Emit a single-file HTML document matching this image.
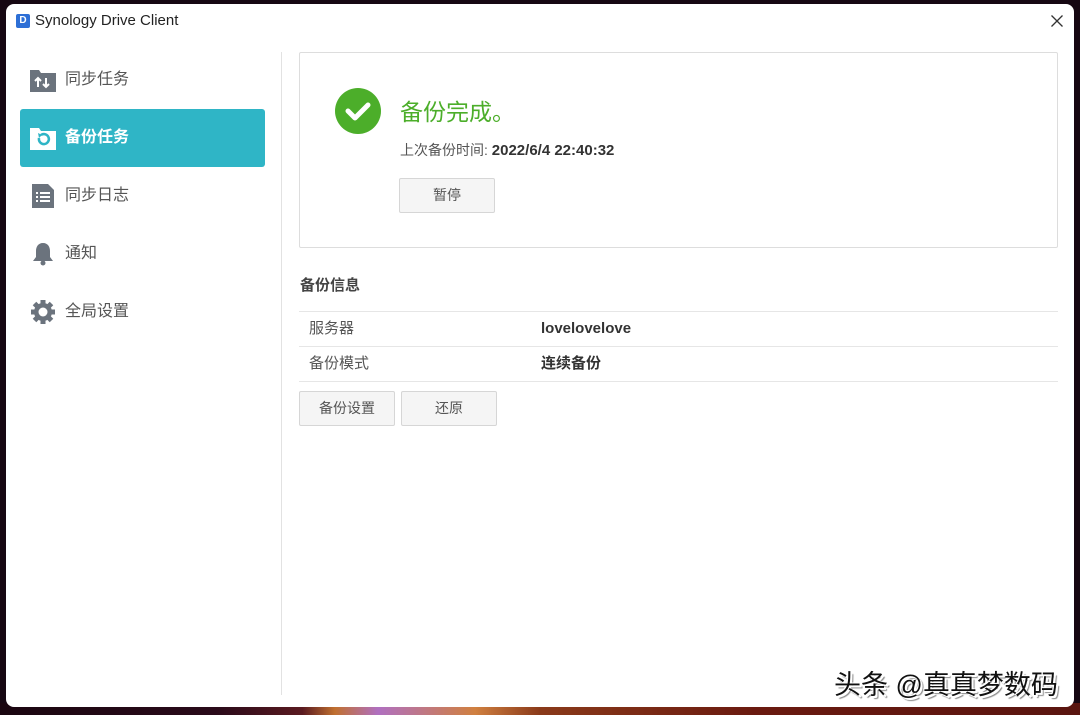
<!DOCTYPE html>
<html><head><meta charset="utf-8"><style>
*{margin:0;padding:0;box-sizing:border-box}
html,body{width:1080px;height:715px;overflow:hidden}
body{background:#160712;position:relative;font-family:"Liberation Sans","Noto Sans CJK SC",sans-serif;color:#333}
.strip{position:absolute;left:0;right:0;bottom:0;height:12px;background:linear-gradient(90deg,#1a0610 0%,#2a0a1a 20%,#5a1a20 28%,#c07030 31%,#b070c0 35%,#d08040 44%,#8a3a1a 50%,#6a1a10 70%,#5a1510 100%)}
.win{position:absolute;left:6px;top:4px;width:1068px;height:703px;background:#fff;border-radius:8px;overflow:hidden}
.title{position:absolute;left:29px;top:8px;font-size:15px;color:#222}
.logo{position:absolute;left:10px;top:10px;width:14px;height:14px;background:#2d6fd6;border-radius:2px;color:#fff;font-size:10px;font-weight:bold;text-align:center;line-height:14px}
.side{position:absolute;left:0;top:0;width:275px;height:100%}
.item{position:absolute;left:14px;width:245px;height:58px;font-size:16px;color:#555;line-height:58px;padding-left:45px}
.item.act{background:#2fb5c6;color:#fff;border-radius:3px;font-weight:bold}
.ic{position:absolute;left:10px;top:17px;width:26px;height:24px}
.vline{position:absolute;left:275px;top:48px;width:1px;height:643px;background:#e2e2e2}
.card{position:absolute;left:293px;top:48px;width:759px;height:196px;border:1px solid #ddd;border-radius:2px}
.btn{position:absolute;background:#f5f5f5;border:1px solid #d6d6d6;border-radius:2px;font-size:14px;color:#555;text-align:center}
.row{position:absolute;left:293px;width:759px;height:35px;border-top:1px solid #e6e6e6;font-size:15px;line-height:34px}
.wm{position:absolute;left:834px;top:663px;font-size:27px;color:#111;text-shadow:2px 2px 0 #fff,-1px -1px 0 #fff,3px 3px 1px #888}
</style></head><body>
<div class="strip"></div>
<div class="win">
<div class="logo">D</div>
<div class="title">Synology Drive Client</div>
<svg style="position:absolute;left:1045px;top:11px" width="12" height="12" viewBox="0 0 12 12"><path d="M0.5 0.5l11 11M11.5 0.5l-11 11" stroke="#333" stroke-width="1.3"/></svg>
<div class="side">
 <div class="item" style="top:47px"><svg class="ic" viewBox="0 0 26 24"><path d="M0 2h9l2 3h15v19H0z" fill="#6b737d"/><path d="M8 19V10M5 13l3-3 3 3M16 10v9M13 16l3 3 3-3" stroke="#fff" stroke-width="2" fill="none"/></svg>同步任务</div>
 <div class="item act" style="top:105px"><svg class="ic" viewBox="0 0 26 24"><path d="M0 2h9l2 3h15v19H0z" fill="#fff"/><path d="M9 12a5 5 0 1 0 2-3" stroke="#2fb5c6" stroke-width="2.5" fill="none"/><path d="M8 7l4 2-3 3z" fill="#2fb5c6"/></svg>备份任务</div>
 <div class="item" style="top:163px"><svg class="ic" viewBox="0 0 26 24" style="left:12px"><path d="M0 0h16l6 6v19H0z" fill="#6b737d"/><path d="M4 9h2M8 9h10M4 13h2M8 13h10M4 17h2M8 17h10" stroke="#fff" stroke-width="2"/></svg>同步日志</div>
 <div class="item" style="top:221px"><svg class="ic" viewBox="0 0 26 24"><path d="M13 1c-5 0-7 4-7 8v6l-3 4h20l-3-4V9c0-4-2-8-7-8z" fill="#6b737d"/><circle cx="13" cy="21" r="2.5" fill="#6b737d"/></svg>通知</div>
 <div class="item" style="top:279px"><svg class="ic" viewBox="0 0 26 24"><circle cx="13" cy="12" r="9" fill="#6b737d"/><g stroke="#6b737d" stroke-width="5"><path d="M13 0v24M1 12h24M4.5 3.5l17 17M21.5 3.5l-17 17"/></g><circle cx="13" cy="12" r="4.5" fill="#fff"/></svg>全局设置</div>
</div>
<div class="vline"></div>
<div class="card">
 <svg style="position:absolute;left:34px;top:34px" width="48" height="48" viewBox="0 0 48 48"><circle cx="24" cy="24" r="23" fill="#4cae2a"/><path d="M14 24l7 7 13-13" stroke="#fff" stroke-width="5" fill="none" stroke-linecap="round" stroke-linejoin="round"/></svg>
 <div style="position:absolute;left:100px;top:40px;font-size:23px;color:#4cae2a">备份完成。</div>
 <div style="position:absolute;left:100px;top:87px;font-size:14px;color:#555">上次备份时间: <b style="color:#333;font-size:15px">2022/6/4 22:40:32</b></div>
 <div class="btn" style="left:99px;top:125px;width:96px;height:35px;line-height:33px">暂停</div>
</div>
<div style="position:absolute;left:294px;top:270px;font-size:15px;font-weight:bold;color:#444">备份信息</div>
<div class="row" style="top:307px"><span style="position:absolute;left:10px;color:#555">服务器</span><b style="position:absolute;left:242px;color:#333">lovelovelove</b></div>
<div class="row" style="top:342px;border-bottom:1px solid #e6e6e6;height:36px"><span style="position:absolute;left:10px;color:#555">备份模式</span><b style="position:absolute;left:242px;color:#333">连续备份</b></div>
<div class="btn" style="left:293px;top:387px;width:96px;height:35px;line-height:33px">备份设置</div>
<div class="btn" style="left:395px;top:387px;width:96px;height:35px;line-height:33px">还原</div>
</div>
<div class="wm">头条 @真真梦数码</div>
</body></html>
